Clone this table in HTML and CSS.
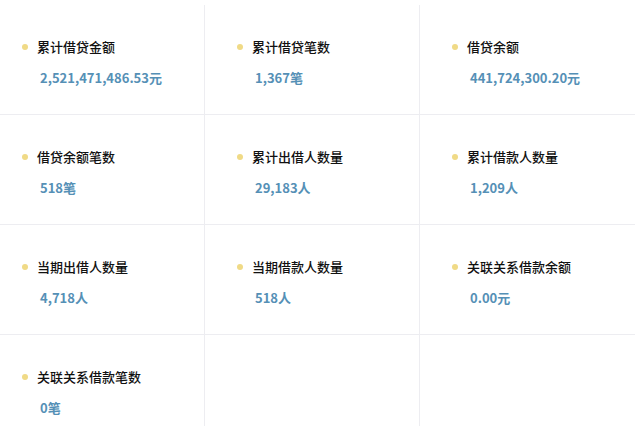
FILE: index.html
```html
<!DOCTYPE html>
<html lang="zh-CN">
<head>
<meta charset="utf-8">
<title>数据统计</title>
<link rel="stylesheet" href="styles.css">
</head>
<body>
<div class="grid">
  <div class="cell"><div class="label"><span class="dot"></span>累计借贷金额</div><div class="value">2,521,471,486.53元</div></div>
  <div class="cell"><div class="label"><span class="dot"></span>累计借贷笔数</div><div class="value">1,367笔</div></div>
  <div class="cell"><div class="label"><span class="dot"></span>借贷余额</div><div class="value">441,724,300.20元</div></div>
  <div class="cell"><div class="label"><span class="dot"></span>借贷余额笔数</div><div class="value">518笔</div></div>
  <div class="cell"><div class="label"><span class="dot"></span>累计出借人数量</div><div class="value">29,183人</div></div>
  <div class="cell"><div class="label"><span class="dot"></span>累计借款人数量</div><div class="value">1,209人</div></div>
  <div class="cell"><div class="label"><span class="dot"></span>当期出借人数量</div><div class="value">4,718人</div></div>
  <div class="cell"><div class="label"><span class="dot"></span>当期借款人数量</div><div class="value">518人</div></div>
  <div class="cell"><div class="label"><span class="dot"></span>关联关系借款余额</div><div class="value">0.00元</div></div>
  <div class="cell"><div class="label"><span class="dot"></span>关联关系借款笔数</div><div class="value">0笔</div></div>
  <div class="cell"></div>
  <div class="cell"></div>
</div>
</body>
</html>
```
FILE: styles.css
```css
html, body {
  margin: 0;
  padding: 0;
  background: #ffffff;
  overflow: hidden;
}
body {
  font-family: "Noto Sans CJK SC", "Noto Sans", sans-serif;
}
.grid {
  display: grid;
  grid-template-columns: repeat(3, 215px);
  grid-auto-rows: 110px;
  margin: 5px 0 0 -10px;
}
.cell {
  box-sizing: border-box;
  border-right: 1px solid #ededf1;
  border-bottom: 1px solid #ededf1;
  padding: 34px 0 0 32px;
}
.cell:nth-child(3n) {
  border-right: none;
}
.label {
  display: flex;
  align-items: center;
  gap: 9px;
  height: 16px;
  font-size: 13px;
  line-height: 16px;
  font-weight: 500;
  color: #111111;
}
.dot {
  width: 6px;
  height: 6px;
  border-radius: 50%;
  background: #f0da86;
  flex: none;
}
.value {
  margin: 15px 0 0 18px;
  height: 16px;
  font-size: 13px;
  line-height: 16px;
  font-weight: 600;
  color: #5590b6;
}
```
